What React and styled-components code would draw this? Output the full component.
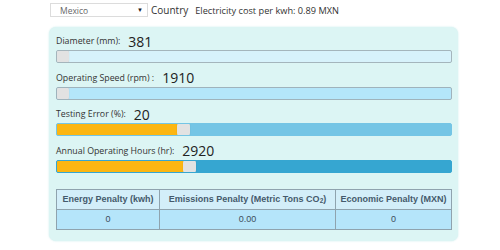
import React from "react";
import styled, { createGlobalStyle } from "styled-components";

const Global = createGlobalStyle`
  body {
    margin: 0;
    background: #ffffff;
    font-family: "Open Sans", sans-serif;
  }
`;

const Page = styled.div`
  width: 500px;
  height: 250px;
  overflow: hidden;
`;

const TopBar = styled.div`
  display: flex;
  align-items: center;
  padding: 3px 0 0 50px;
  height: 14px;
  font-size: 9.5px;
  color: #333;
`;

const Select = styled.div`
  box-sizing: border-box;
  width: 98px;
  height: 14px;
  border: 1px solid #dcdcdc;
  display: flex;
  align-items: center;
  justify-content: space-between;
  padding: 0 4px 0 9px;
  font-size: 8.5px;
  color: #666;
`;

const Arrow = styled.span`
  font-size: 6px;
  color: #222;
`;

const Country = styled.span`
  margin-left: 3px;
  font-size: 10px;
  color: #333;
`;

const Cost = styled.span`
  margin-left: 7px;
  font-size: 9.2px;
  color: #333;
`;

const Panel = styled.div`
  margin: 10px 0 0 49px;
  width: 409px;
  box-sizing: border-box;
  background: #dcf5f4;
  border-radius: 7px;
  padding: 5px 6px 11px 7px;
  box-shadow: 0 0 2px rgba(160, 220, 220, 0.6);
`;

const Group = styled.div`
  margin-bottom: 5.5px;
`;

const LabelRow = styled.div`
  display: flex;
  align-items: center;
  height: 18px;
`;

const Label = styled.span`
  font-size: 8.8px;
  color: #333;
`;

const Value = styled.span`
  margin-left: 8px;
  font-size: 14px;
  color: #222;
`;

const Track = styled.div`
  position: relative;
  box-sizing: border-box;
  height: 13px;
  border-radius: 2px;
  background: ${(p) => p.$bg};
  border: 1px solid ${(p) => p.$border};
  overflow: hidden;
`;

const Fill = styled.div`
  position: absolute;
  left: 0;
  top: 0;
  bottom: 0;
  background: #fcb612;
`;

const Handle = styled.div`
  position: absolute;
  top: -1px;
  width: 13px;
  height: 13px;
  border-radius: 3px;
  background: #e2e2e2;
  box-shadow: 0 0 1px rgba(0, 0, 0, 0.2);
`;

const Table = styled.table`
  margin-top: 16px;
  width: 100%;
  border-collapse: collapse;
  font-family: "Liberation Sans", Arial, sans-serif;
`;

const Th = styled.th`
  height: 19px;
  background: #d3eef9;
  border: 1px solid #8fa3ae;
  font-size: 9px;
  line-height: 10px;
  color: #455a6c;
  font-weight: bold;
  padding: 0;
  width: ${(p) => p.$w};
`;

const Sub = styled.sub`
  font-size: 6.5px;
  line-height: 0;
  vertical-align: -1px;
`;

const Td = styled.td`
  height: 19px;
  background: #b5e5fa;
  border: 1px solid #8fa3ae;
  font-size: 9px;
  color: #3d4d5a;
  text-align: center;
  padding: 0;
`;

const sliders = [
  { label: "Diameter (mm):", value: "381", pos: 0, bg: "#d7f2fb", border: "#a4b5bc" },
  { label: "Operating Speed (rpm) :", value: "1910", pos: 0, bg: "#b4e6fa", border: "#9fb3bc" },
  { label: "Testing Error (%):", value: "20", pos: 121, bg: "#74c5e5", border: "#74c5e5", fill: true },
  { label: "Annual Operating Hours (hr):", value: "2920", pos: 127, bg: "#36a6d1", border: "#36a6d1", fill: true },
];

export default function App() {
  return (
    <Page>
      <Global />
      <TopBar>
        <Select>
          <span>Mexico</span>
          <Arrow>▼</Arrow>
        </Select>
        <Country>Country</Country>
        <Cost>Electricity cost per kwh: 0.89 MXN</Cost>
      </TopBar>
      <Panel>
        {sliders.map((s) => (
          <Group key={s.label}>
            <LabelRow>
              <Label>{s.label}</Label>
              <Value>{s.value}</Value>
            </LabelRow>
            <Track $bg={s.bg} $border={s.border}>
              {s.fill && <Fill style={{ width: s.pos + 6 }} />}
              <Handle style={{ left: s.pos - 1 }} />
            </Track>
          </Group>
        ))}
        <Table>
          <thead>
            <tr>
              <Th $w="102px">Energy Penalty (kwh)</Th>
              <Th $w="175px">
                Emissions Penalty (Metric Tons CO<Sub>2</Sub>)
              </Th>
              <Th>Economic Penalty (MXN)</Th>
            </tr>
          </thead>
          <tbody>
            <tr>
              <Td>0</Td>
              <Td>0.00</Td>
              <Td>0</Td>
            </tr>
          </tbody>
        </Table>
      </Panel>
    </Page>
  );
}
